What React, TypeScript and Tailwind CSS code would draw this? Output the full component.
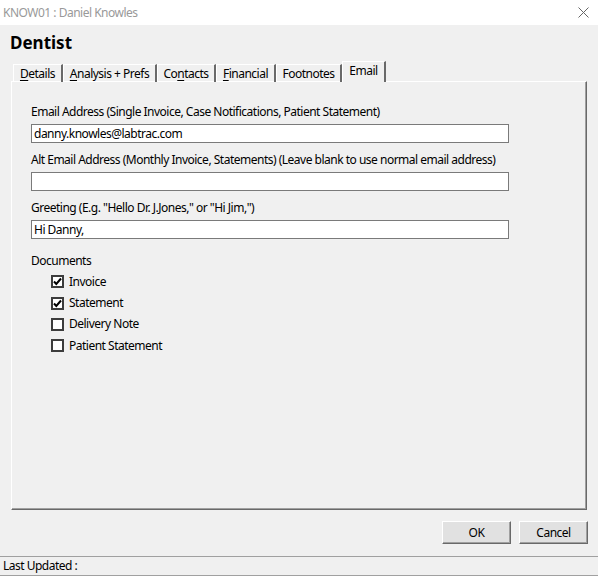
import React from "react";

// tab widths measured off the screenshot, left edges at 13, 63, 157, 216, 276
const tabs = [
  { label: "Details", u: 0, w: "w-[50px]" },
  { label: "Analysis + Prefs", u: 0, w: "w-[94px]" },
  { label: "Contacts", u: 2, w: "w-[59px]" },
  { label: "Financial", u: 0, w: "w-[60px]" },
  { label: "Footnotes", u: -1, w: "w-[66px]" },
];

const Mnemonic = ({ text, u }: { text: string; u: number }) => {
  if (u < 0) return <>{text}</>;
  return (
    <>
      {text.slice(0, u)}
      <span className="underline underline-offset-2">{text[u]}</span>
      {text.slice(u + 1)}
    </>
  );
};

const Field = ({ label, value }: { label: string; value: string }) => (
  <div className="flex flex-col">
    <div className="h-[16px] leading-[16px]">{label}</div>
    <div className="mt-[4px] h-[19px] w-[478px] border border-[#7a7a7a] bg-white px-[2px] leading-[17px]">
      {value}
    </div>
  </div>
);

const Check = ({ label, checked }: { label: string; checked: boolean }) => (
  <div className="flex h-[21.4px] items-center gap-[5px]">
    <div className="flex h-[13px] w-[13px] items-center justify-center border-2 border-[#3c3c3c] bg-white">
      {checked && (
        <svg width="9" height="9" viewBox="0 0 9 9">
          <path d="M1 4.5 L3.3 7 L8 1.5" fill="none" stroke="#000" strokeWidth="2" />
        </svg>
      )}
    </div>
    <span>{label}</span>
  </div>
);

const Button = ({ label }: { label: string }) => (
  <div className="flex h-[23px] w-[69px] items-center justify-center border border-t-white border-l-white border-r-[#696969] border-b-[#696969] bg-[#e1e1e1] shadow-[inset_-1px_-1px_0_#a0a0a0]">
    {label}
  </div>
);

export default function App() {
  return (
    <div
      className="flex h-[576px] w-[598px] flex-col bg-[#f0f0f0] text-[12px] tracking-[-0.5px] text-black"
      style={{ fontFamily: '"Segoe UI", "Noto Sans", sans-serif' }}
    >
      <div className="flex h-[25px] items-center justify-between bg-white pl-[3px] pr-[9px] text-[#999]">
        <span>KNOW01 : Daniel Knowles</span>
        <svg width="11" height="11" viewBox="0 0 11 11">
          <path d="M0.5 0.5 L10.5 10.5 M10.5 0.5 L0.5 10.5" stroke="#666" strokeWidth="1" />
        </svg>
      </div>

      <div className="flex h-[36px] items-center pl-[10px] text-[17px] font-bold tracking-normal">Dentist</div>

      <div className="relative z-10 -mb-px flex h-[21px] items-end pl-[13px]">
        {tabs.map((t) => (
          <div
            key={t.label}
            className={`${t.w} flex h-[18px] items-center justify-center border-t border-l border-r-2 border-t-white border-l-white border-r-[#696969] leading-none`}
          >
            <Mnemonic text={t.label} u={t.u} />
          </div>
        ))}
        <div className="flex h-[21px] w-[44px] items-center justify-center border-t border-l border-r-2 border-t-white border-l-white border-r-[#696969] bg-[#f0f0f0] pb-[2px] leading-none">
          Email
        </div>
      </div>

      <div className="mx-[11px] flex h-[429px] flex-col border border-t-white border-l-white border-r-[#696969] border-b-[#696969] shadow-[inset_-1px_-1px_0_#a0a0a0] pl-[19px] pt-[22px]">
        <div className="flex flex-col gap-[9px]">
          <Field
            label="Email Address (Single Invoice, Case Notifications, Patient Statement)"
            value="danny.knowles@labtrac.com"
          />
          <Field
            label="Alt Email Address (Monthly Invoice, Statements) (Leave blank to use normal email address)"
            value=""
          />
          <Field label={'Greeting (E.g. "Hello Dr. J.Jones," or "Hi Jim,")'} value="Hi Danny," />
        </div>
        <div className="mt-[14px] h-[16px] leading-[16px]">Documents</div>
        <div className="mt-[2px] flex flex-col pl-[20px]">
          <Check label="Invoice" checked />
          <Check label="Statement" checked />
          <Check label="Delivery Note" checked={false} />
          <Check label="Patient Statement" checked={false} />
        </div>
      </div>

      <div className="flex justify-end gap-[8px] pr-[10px] pt-[11px]">
        <Button label="OK" />
        <Button label="Cancel" />
      </div>

      <div className="mt-[12px] flex flex-1 items-center border-t border-b border-[#a0a0a0] pl-[3px]">
        Last Updated :
      </div>
    </div>
  );
}
